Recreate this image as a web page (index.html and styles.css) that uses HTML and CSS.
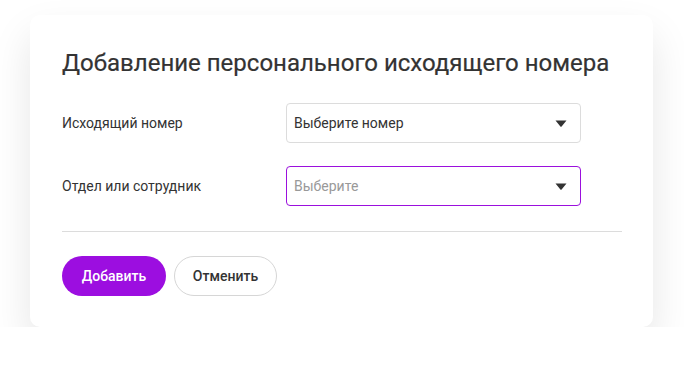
FILE: index.html
```html
<!DOCTYPE html>
<html lang="ru">
<head>
<meta charset="utf-8">
<link rel="stylesheet" href="styles.css">
</head>
<body>
<div class="card">
  <h1 class="title">Добавление персонального исходящего номера</h1>
  <div class="row">
    <div class="label">Исходящий номер</div>
    <div class="select">
      <span class="value">Выберите номер</span>
      <svg class="caret" width="12" height="7" viewBox="0 0 12 7"><path d="M0.5 0.5h11L6.8 6.2a1 1 0 0 1-1.6 0z" fill="#333"/></svg>
    </div>
  </div>
  <div class="row">
    <div class="label">Отдел или сотрудник</div>
    <div class="select focus">
      <span class="value placeholder">Выберите</span>
      <svg class="caret" width="12" height="7" viewBox="0 0 12 7"><path d="M0.5 0.5h11L6.8 6.2a1 1 0 0 1-1.6 0z" fill="#333"/></svg>
    </div>
  </div>
  <div class="divider"></div>
  <div class="actions">
    <button class="btn primary">Добавить</button>
    <button class="btn secondary">Отменить</button>
  </div>
</div>
</body>
</html>
```
FILE: styles.css
```css
html, body {
  margin: 0;
  padding: 0;
  background: #fff;
}
body {
  font-family: Roboto, "Noto Sans", sans-serif;
  color: #333;
  padding: 15px 0 0 30px;
}
.card {
  width: 623px;
  height: 312px;
  box-sizing: border-box;
  background: #fff;
  border-radius: 10px;
  padding: 33px 31px 0 32px;
  box-shadow: 0 20px 40px rgba(0, 0, 0, 0.1);
}
.title {
  margin: 0 0 25px;
  font-size: 24px;
  font-weight: 400;
  line-height: 30px;
  color: #333;
  letter-spacing: 0;
  -webkit-text-stroke: 0.2px #333;
}
.row {
  display: flex;
  align-items: center;
  margin-bottom: 23px;
}
.label {
  width: 224px;
  font-size: 14px;
  color: #333;
}
.select {
  width: 295px;
  height: 40px;
  box-sizing: border-box;
  border: 1px solid #dcdcdc;
  border-radius: 4px;
  display: flex;
  align-items: center;
  justify-content: space-between;
  padding: 0 13px 0 7px;
}
.select.focus {
  border-color: #9b10dd;
}
.value {
  font-size: 14px;
  color: #333;
}
.value.placeholder {
  color: #999;
}
.caret {
  display: block;
}
.divider {
  height: 1px;
  background: #dcdcdc;
  margin: 25px 0 24px;
}
.actions {
  display: flex;
  gap: 8px;
}
.btn {
  height: 40px;
  border-radius: 20px;
  font-family: Roboto, "Noto Sans", sans-serif;
  font-size: 14px;
  font-weight: 500;
  padding: 0;
  cursor: pointer;
}
.primary {
  width: 104px;
  background: #9c0ee0;
  color: #fff;
  border: none;
}
.secondary {
  width: 103px;
  background: #fff;
  color: #333;
  border: 1px solid #d6d6d6;
}
```
